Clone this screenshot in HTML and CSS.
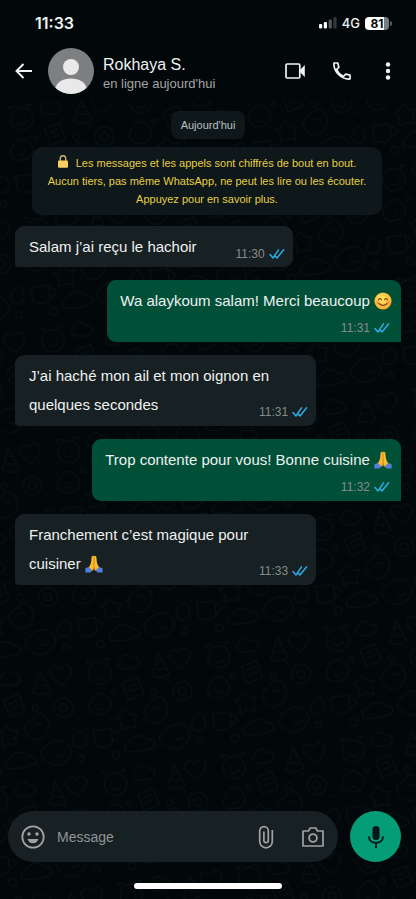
FILE: index.html
```html
<!DOCTYPE html>
<html lang="fr">
<head>
<meta charset="utf-8">
<meta name="viewport" content="width=device-width, initial-scale=1">
<title>Rokhaya S.</title>
<link rel="stylesheet" href="styles.css">
</head>
<body>
<svg class="defs" aria-hidden="true">
  <symbol id="ticks" viewBox="0 0 16 12">
    <path d="M1 6.500 4 10 9.500 1.800M6.600 8.600 8 10 14.600 1.800" fill="none" stroke="#2fabe6" stroke-width="1.500" stroke-linecap="round" stroke-linejoin="round"/>
  </symbol>
  <symbol id="pray" viewBox="0 0 18 18">
    <path d="M.4 13.300 5 11.600 7.500 15.200 5.300 17.600H.4zM17.600 13.300 13 11.600 10.500 15.200 12.700 17.600h4.900z" fill="#527fd8"/>
    <path d="M7.800.8C6.600 1 6.500 2.500 6.400 4.500 6.200 7.400 5.900 9 4 12l3.600 3.800L9 13.600l1.400 2.200L14 12c-1.900-3-2.200-4.600-2.400-7.500C11.500 2.500 11.400 1 10.200.8 9.500.6 9 1 9 1.500 9 1 8.500.6 7.800.8z" fill="#fbbd2d"/>
    <path d="M9 1.500v10.800L7.500 15.600M9 12.300l1.500 3.300" fill="none" stroke="#d9821b" stroke-width="1"/>
  </symbol>
</svg>

<div class="status">
  <time>11:33</time>
  <div class="status-right">
    <svg width="18" height="12" viewBox="0 0 18 12" aria-hidden="true">
      <rect x="0" y="7" width="3.200" height="4.500" rx="1.200" fill="#fff"/>
      <rect x="4.800" y="5" width="3.200" height="6.500" rx="1.200" fill="#fff"/>
      <rect x="9.600" y="2.500" width="3.200" height="9" rx="1.200" fill="#51575a"/>
      <rect x="14.400" y="0" width="3.200" height="11.500" rx="1.200" fill="#33393b"/>
    </svg>
    <span class="network">4G</span>
    <span class="battery"><span class="level">81</span></span>
  </div>
</div>

<header class="header">
  <button class="icon-button" aria-label="Retour">
    <svg width="18" height="18" viewBox="0 0 18 18"><path d="M17 9H2M8.500 2 1.500 9l7 7" fill="none" stroke="#f2f4f4" stroke-width="1.900"/></svg>
  </button>
  <svg class="avatar" width="46" height="46" viewBox="0 0 46 46" aria-hidden="true">
    <clipPath id="round"><circle cx="23" cy="23" r="23"/></clipPath>
    <g clip-path="url(#round)"><path d="M0 0h46v46H0z" fill="#7d7f81"/><circle cx="23" cy="19" r="8" fill="#e9e9ea"/><path d="M7 42c1-8 8-11.500 16-11.500S38 34 39 42v4H7z" fill="#e9e9ea"/></g>
  </svg>
  <div class="contact">
    <h1>Rokhaya S.</h1>
    <p>en ligne aujourd'hui</p>
  </div>
  <div class="actions">
    <button class="icon-button" aria-label="Appel vidéo">
      <svg width="20" height="16" viewBox="0 0 20 16"><rect x="1" y="1" width="13.800" height="14" rx="1.200" fill="none" stroke="#f2f4f4" stroke-width="1.700"/><path d="M15 7 19.800 2v12L15 9z" fill="#f2f4f4"/></svg>
    </button>
    <button class="icon-button" aria-label="Appel vocal">
      <svg width="18" height="18" viewBox="0 0 18 18"><path d="M1 1h3.800l1 4.300-2.300 2.300c1.500 3 3.900 5.400 6.900 6.900l2.300-2.300 4.300 1V17C8.500 17.800.2 9.500 1 1z" fill="none" stroke="#f2f4f4" stroke-width="1.700" stroke-linejoin="round"/></svg>
    </button>
    <button class="icon-button more" aria-label="Plus d'options">
      <svg width="6" height="18" viewBox="0 0 6 18" fill="#f2f4f4"><circle cx="3" cy="2.500" r="2.200"/><circle cx="3" cy="9" r="2.200"/><circle cx="3" cy="15.500" r="2.200"/></svg>
    </button>
  </div>
</header>

<div class="conversation">
  <svg class="wallpaper" aria-hidden="true">
    <pattern id="doodles" width="150" height="140" patternUnits="userSpaceOnUse" patternTransform="scale(.8) rotate(-8)">
      <g fill="none" stroke="#0a1416" stroke-width="1">
        <circle cx="24" cy="26" r="14"/><path d="M17 29q7 8 14 0M19 21v2M29 21v2M14 14l-5-5 9 1M34 14l5-5-9 1"/>
        <path d="M52 12q8-10 15 0 10 1 7 10-8 6-22 2-8-5 0-12z"/>
        <path d="M88 38l12-26 10 27q-12 6-22-1zM94 30l12 2M97 21l7 1"/>
        <path d="M126 14q8-9 13 0 3 8-13 20-16-12-13-20 5-9 13 0z"/>
        <path d="M50 42l20-5 5 22-20 5zM56 48l11-3M58 54l11-3"/>
        <circle cx="123" cy="62" r="12"/><circle cx="123" cy="62" r="5"/><path d="M109 48l-4-5M136 75l6 5"/>
        <path d="M8 58q12-16 22 0 7 12-6 18-16 4-20-8 0-6 4-10zM12 64h2M22 64h2M14 70q4 3 8-1"/>
        <path d="M80 72q14-14 20 0t-6 22-20-4 6-18zM84 79q6-4 10 2"/>
        <path d="M42 82l6-8 7 8 8 1-5 8 2 9-10-3-9 3 1-10-6-7z"/>
        <path d="M6 96h22v18q-11 8-22 0zM28 100q9 0 8 6-1 6-8 5"/>
        <path d="M48 116q12-13 24 0 10 1 8 10-18 6-38 1-2-9 6-11z"/>
        <path d="M100 104q14-6 22 4t-4 20-26-2 8-22zM105 111v2M114 112v2M104 119q6 5 12 0"/>
        <path d="M134 96q11-6 12 6t-9 12-8-10z"/><circle cx="88" cy="58" r="4"/><circle cx="38" cy="52" r="3"/><circle cx="30" cy="130" r="5"/><circle cx="136" cy="128" r="4"/>
      </g>
    </pattern>
    <rect width="100%" height="100%" fill="url(#doodles)"/>
  </svg>

  <main class="chat">
    <p class="date">Aujourd'hui</p>
    <p class="notice"><svg class="lock" width="10" height="13" viewBox="0 0 10 13" aria-hidden="true"><path d="M2.300 6V3.500a2.700 2.700 0 0 1 5.400 0V6" fill="none" stroke="#c9b06c" stroke-width="1.400"/><rect y="5.500" width="10" height="7.200" rx="1" fill="#fbcf62"/></svg>Les messages et les appels sont chiffrés de bout en bout.<br>Aucun tiers, pas même WhatsApp, ne peut les lire ou les écouter.<br>Appuyez pour en savoir plus.</p>

    <article class="message in short">
      <p>Salam j’ai reçu le hachoir</p>
      <footer><time>11:30</time><svg class="ticks"><use href="#ticks"/></svg></footer>
    </article>
    <article class="message out">
      <p>Wa alaykoum salam! Merci beaucoup <svg class="emoji" viewBox="0 0 18 18" role="img" aria-label="visage souriant"><radialGradient id="face" cx=".45" cy=".4" r=".6"><stop offset=".3" stop-color="#ffdc54"/><stop offset="1" stop-color="#f8a62c"/></radialGradient><circle cx="9" cy="9" r="8.600" fill="url(#face)"/><circle cx="3.800" cy="10.500" r="2" fill="#f58b3c" opacity=".6"/><circle cx="14.200" cy="10.500" r="2" fill="#f58b3c" opacity=".6"/><path d="M4.500 7.800q1.500-2.400 3 0M10.500 7.800q1.500-2.400 3 0M5 11.500q4 3.800 8 0" fill="none" stroke="#7c4514" stroke-width="1.100" stroke-linecap="round"/></svg></p>
      <footer><time>11:31</time><svg class="ticks"><use href="#ticks"/></svg></footer>
    </article>
    <article class="message in long">
      <p>J’ai haché mon ail et mon oignon en quelques secondes</p>
      <footer><time>11:31</time><svg class="ticks"><use href="#ticks"/></svg></footer>
    </article>
    <article class="message out">
      <p>Trop contente pour vous! Bonne cuisine <svg class="emoji" role="img" aria-label="mains jointes"><use href="#pray"/></svg></p>
      <footer><time>11:32</time><svg class="ticks"><use href="#ticks"/></svg></footer>
    </article>
    <article class="message in long">
      <p>Franchement c’est magique pour cuisiner <svg class="emoji" role="img" aria-label="mains jointes"><use href="#pray"/></svg></p>
      <footer><time>11:33</time><svg class="ticks"><use href="#ticks"/></svg></footer>
    </article>
  </main>

  <form class="composer">
    <div class="field">
      <button type="button" class="icon-button" aria-label="Emoji">
        <svg width="24" height="24" viewBox="0 0 24 24"><circle cx="12" cy="12" r="10.700" fill="none" stroke="#a0a2a3" stroke-width="1.800"/><circle cx="8" cy="9" r="1.800" fill="#a0a2a3"/><circle cx="16" cy="9" r="1.800" fill="#a0a2a3"/><path d="M6.500 14h11q-1.500 4.200-5.500 4.200T6.500 14z" fill="#a0a2a3"/></svg>
      </button>
      <input type="text" placeholder="Message" aria-label="Message">
      <button type="button" class="icon-button" aria-label="Joindre">
        <svg width="16" height="24" viewBox="0 0 16 24"><path d="M14.300 5v11.500a6.300 6.300 0 0 1-12.600 0V6a4.300 4.300 0 0 1 8.600 0v9.500a2.200 2.200 0 0 1-4.400 0V6.500" fill="none" stroke="#a0a2a3" stroke-width="1.700"/></svg>
      </button>
      <button type="button" class="icon-button" aria-label="Appareil photo">
        <svg width="22" height="20" viewBox="0 0 22 20"><path d="M1 4h5.500l1.700-3h5.600l1.700 3H21v15H1z" fill="none" stroke="#a0a2a3" stroke-width="1.700" stroke-linejoin="round"/><circle cx="11" cy="11" r="3.900" fill="none" stroke="#a0a2a3" stroke-width="1.800"/></svg>
      </button>
    </div>
    <button type="button" class="mic" aria-label="Message vocal">
      <svg width="16" height="24" viewBox="0 0 16 24"><rect x="4.500" y="1" width="7" height="14" rx="3.500" fill="#04171a"/><path d="M1 11.500c0 8.500 14 8.500 14 0M8 18v5" fill="none" stroke="#04171a" stroke-width="1.900"/></svg>
    </button>
  </form>
  <div class="home"></div>
</div>
</body>
</html>
```
FILE: styles.css
```css
* {
  box-sizing: border-box;
}

body {
  margin: 0;
  min-height: 100vh;
  display: flex;
  flex-direction: column;
  background: #02080a;
  color: #eef1f1;
  font-family: "Liberation Sans", Arial, sans-serif;
}

h1,
p {
  margin: 0;
  font-weight: 400;
}

svg {
  flex: none;
}

.defs {
  position: absolute;
  width: 0;
  height: 0;
}

.icon-button {
  display: flex;
  padding: 0;
  border: 0;
  background: none;
}

.status {
  display: flex;
  align-items: center;
  justify-content: space-between;
  padding: 12px 27px 0 35px;
  font-family: Inter, sans-serif;
  font-size: 16px;
  line-height: 22px;
  font-weight: 600;
}

.status-right {
  display: flex;
  align-items: center;
  gap: 5px;
}

.network {
  font-size: 13px;
  font-weight: 500;
}

.battery {
  position: relative;
  display: block;
  width: 24px;
  height: 13px;
  border-radius: 4px;
  background: linear-gradient(90deg, #fff 80%, #777b7d 80%);
}

.battery::after {
  content: "";
  position: absolute;
  top: 4px;
  right: -3px;
  width: 2px;
  height: 5px;
  border-radius: 0 2px 2px 0;
  background: #565b5d;
}

.level {
  display: block;
  color: #070b0d;
  font-size: 12px;
  font-weight: 700;
  line-height: 13px;
  text-align: center;
}

.header {
  display: flex;
  align-items: center;
  padding: 14px 25px 7px 15px;
}

.avatar {
  margin-left: 15px;
}

.contact {
  flex: 1;
  margin-left: 9px;
  padding-top: 5px;
}

.contact h1 {
  font-size: 16px;
  line-height: 20px;
}

.contact p {
  color: #a3a5a5;
  font-size: 13px;
  line-height: 18px;
}

.actions {
  display: flex;
  align-items: center;
  gap: 28px;
}

.more {
  padding-left: 6px;
}

.conversation {
  position: relative;
  flex: 1;
  display: flex;
  flex-direction: column;
}

.wallpaper {
  position: absolute;
  inset: 0;
  width: 100%;
  height: 100%;
}

.chat,
.composer,
.home {
  position: relative;
}

.chat {
  flex: 1;
  display: flex;
  flex-direction: column;
  gap: 13px;
  padding: 10px 15px 20px;
}

.date {
  align-self: center;
  margin-bottom: -5px;
  padding: 5px 10px;
  border-radius: 8px;
  background: #0e1719;
  color: #bcc0c1;
  font-size: 11px;
  line-height: 18px;
}

.notice {
  margin: 0 19px -2px 17px;
  padding: 7px 8px;
  border-radius: 10px;
  background: #0e1719;
  color: #e6cf45;
  font-size: 11px;
  line-height: 18px;
  text-align: center;
}

.lock {
  margin-right: 8px;
  vertical-align: -1px;
}

.message {
  border-radius: 9px;
  font-size: 15px;
  line-height: 29px;
}

.message footer {
  display: flex;
  align-items: center;
  justify-content: flex-end;
  gap: 4px;
  color: #858b8c;
  font-size: 12px;
  line-height: 14px;
}

.in {
  align-self: flex-start;
  max-width: 78%;
  padding: 6px 8px 6px 14px;
  border-bottom-left-radius: 4px;
  background: #172022;
}

.out {
  align-self: flex-end;
  padding: 6px 9px 7px 13px;
  border-bottom-right-radius: 0;
  background: #005038;
}

.out footer {
  padding: 6px 2px 0 0;
}

.short {
  display: flex;
  align-items: flex-end;
  gap: 39px;
}

.long {
  display: grid;
  padding-bottom: 7px;
}

.long > * {
  grid-area: 1 / 1;
}

.long p {
  padding-right: 20px;
}

.long footer {
  place-self: end;
}

.ticks {
  width: 16px;
  height: 12px;
}

.emoji {
  width: 18px;
  height: 18px;
  vertical-align: -4px;
}

.composer {
  display: flex;
  gap: 12px;
  padding: 0 15px 0 8px;
}

.field {
  flex: 1;
  min-width: 0;
  display: flex;
  align-items: center;
  padding: 0 14px 0 13px;
  border-radius: 26px;
  background: #172022;
}

.field input {
  flex: 1;
  min-width: 0;
  padding: 0 12px;
  border: 0;
  outline: 0;
  background: none;
  color: #eef1f1;
  font: 14px "Liberation Sans", Arial, sans-serif;
}

.field input::placeholder {
  color: #909495;
  opacity: 1;
}

.field .icon-button + .icon-button {
  margin-left: 28px;
}

.mic {
  display: grid;
  place-items: center;
  width: 51px;
  height: 51px;
  padding: 0;
  border: 0;
  border-radius: 50%;
  background: #059d78;
}

.home {
  width: 148px;
  height: 6px;
  margin: 21px auto 10px;
  border-radius: 3px;
  background: #fff;
}
```
